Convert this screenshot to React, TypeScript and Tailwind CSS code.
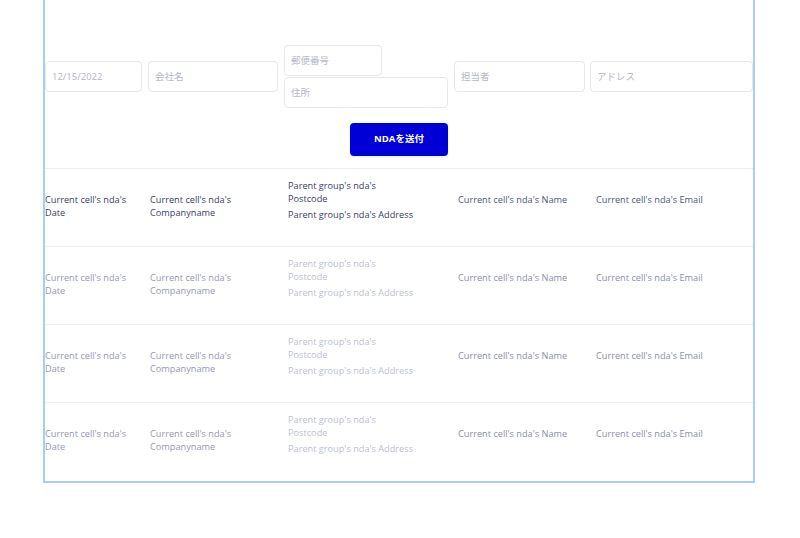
import React from "react";

const font = { fontFamily: '"Open Sans", "Noto Sans CJK JP", sans-serif' };

function Field({ placeholder, className }: { placeholder: string; className: string }) {
  return (
    <input
      placeholder={placeholder}
      className={`h-[31px] rounded-[4px] border border-[#e6e8f0] bg-white px-[6px] text-[9.5px] text-[#3b4060] placeholder:text-[#b3b6c6] outline-none ${className}`}
      style={font}
    />
  );
}

type Tone = "head" | "body";

function Row({ tone, last }: { tone: Tone; last?: boolean }) {
  const c12 = tone === "head" ? "text-[#3c4062]" : "text-[#9699b2]";
  const c3 = tone === "head" ? "text-[#3c4062]" : "text-[#bcbfcf]";
  const c45 = tone === "head" ? "text-[#50567a]" : "text-[#8b8fa8]";
  return (
    <div
      className={`flex h-[78px] text-[9.2px] leading-[13px] ${last ? "" : "border-b border-[#eceef3]"}`}
    >
      <div className={`w-[105px] shrink-0 pt-[24px] ${c12}`}>
        <div className="w-[92px]">Current cell's nda's Date</div>
      </div>
      <div className={`w-[138px] shrink-0 pt-[24px] ${c12}`}>
        <div className="w-[120px]">Current cell's nda's Companyname</div>
      </div>
      <div className={`w-[170px] shrink-0 pt-[10px] ${c3}`}>
        <div className="w-[98px]">Parent group's nda's Postcode</div>
        <div className="mt-[3px] w-[163px]">Parent group's nda's Address</div>
      </div>
      <div className={`w-[138px] shrink-0 pt-[24px] ${c45}`}>
        <div>Current cell's nda's Name</div>
      </div>
      <div className={`flex-1 pt-[24px] ${c45}`}>
        <div>Current cell's nda's Email</div>
      </div>
    </div>
  );
}

export default function App() {
  return (
    <div className="min-h-[538px] w-[800px] bg-white" style={font}>
      <div className="ml-[43px] w-[712px] border-x-2 border-b-2 border-[#a6cdf5]">
        <div className="flex flex-col items-stretch pt-[45px]">
          <div className="flex items-center gap-[6px]">
            <Field placeholder="12/15/2022" className="w-[97px]" />
            <Field placeholder="会社名" className="w-[130px]" />
            <div className="flex w-[164px] flex-col gap-[1px]">
              <Field placeholder="郵便番号" className="w-[98px]" />
              <Field placeholder="住所" className="w-[164px]" />
            </div>
            <Field placeholder="担当者" className="w-[131px]" />
            <Field placeholder="アドレス" className="ml-[-1px] min-w-0 flex-1" />
          </div>
          <div className="mt-[15px] flex justify-center">
            <button
              className="h-[33px] w-[98px] rounded-[4px] bg-[#0000d6] text-[9.5px] font-bold text-white shadow-[0_1px_3px_rgba(0,0,0,0.08)]"
              style={font}
            >
              NDAを送付
            </button>
          </div>
          <div className="mt-[12px] border-b border-[#eceef3]" />
        </div>
        <Row tone="head" />
        <Row tone="body" />
        <Row tone="body" />
        <Row tone="body" last />
      </div>
    </div>
  );
}
